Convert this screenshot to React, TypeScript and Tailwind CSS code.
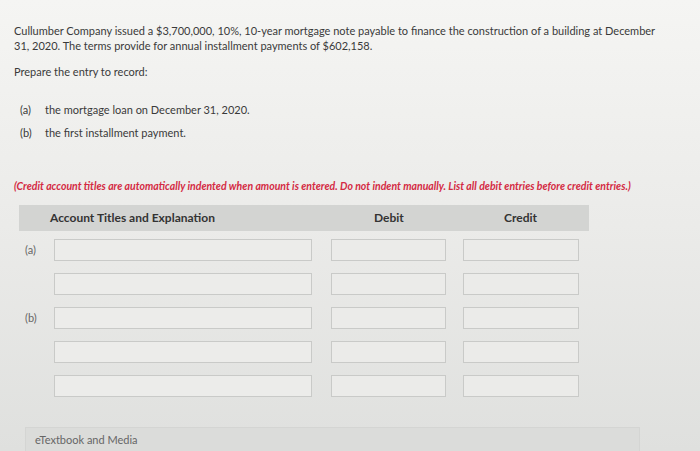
const rows = [
  { label: "(a)" },
  { label: "" },
  { label: "(b)" },
  { label: "" },
  { label: "" },
]

export default function App() {
  return (
    <div className="h-[451px] w-[700px] overflow-hidden bg-gradient-to-b from-[#f5f5f3] via-[#ebebe9] to-[#dfe0de] font-['Lato',_'Noto_Sans',_sans-serif] text-[11px] text-[#3a3a3a]">
      <div className="px-[14px] pt-[23px]">
        <p className="leading-[15px]">
          Cullumber Company issued a $3,700,000, 10%, 10-year mortgage note payable to finance the construction of a building at December
          <br />
          31, 2020. The terms provide for annual installment payments of $602,158.
        </p>
        <p className="mt-[11px] leading-[15px]">Prepare the entry to record:</p>
        <div className="mt-[23px] space-y-[8px] pl-[6px] leading-[15px]">
          <div className="flex">
            <span className="w-[25px]">(a)</span>
            <span>the mortgage loan on December 31, 2020.</span>
          </div>
          <div className="flex">
            <span className="w-[25px]">(b)</span>
            <span>the first installment payment.</span>
          </div>
        </div>
        <p className="mt-[39px] text-[10.5px] font-bold italic leading-[15px] text-[#d42a43]">
          (Credit account titles are automatically indented when amount is entered. Do not indent manually. List all debit entries before credit entries.)
        </p>
      </div>

      <div className="ml-[19px] mt-[11px] flex h-[26px] w-[570px] items-center bg-[#d3d4d2] text-[12px] font-bold text-[#333]">
        <div className="pl-[31px] w-[312px]">Account Titles and Explanation</div>
        <div className="w-[140px] pl-[43px]">Debit</div>
        <div className="pl-[33px]">Credit</div>
      </div>

      <div className="mt-[8px] space-y-[12px]">
        {rows.map((r, i) => (
          <div key={i} className="flex items-center">
            <div className="w-[54px] pl-[25px] text-[11px] text-[#666]">{r.label}</div>
            <div className="h-[22px] w-[258px] border border-[#c9cac8] bg-[#ececea]" />
            <div className="ml-[19px] h-[22px] w-[115px] border border-[#c9cac8] bg-[#ebebe9]" />
            <div className="ml-[17px] h-[22px] w-[116px] border border-[#c9cac8] bg-[#ebebe9]" />
          </div>
        ))}
      </div>

      <div className="ml-[25px] mt-[30px] flex h-[26px] w-[615px] items-center border border-[#d4d5d3] bg-[#dbdcda] pl-[9px] text-[11px] text-[#666]">
        eTextbook and Media
      </div>
    </div>
  )
}
